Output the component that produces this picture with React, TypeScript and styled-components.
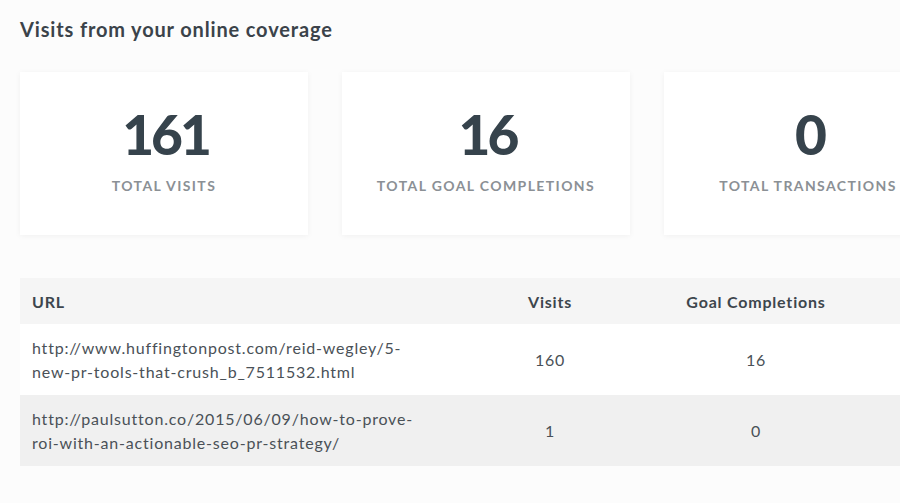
import styled, { createGlobalStyle } from "styled-components";

const GlobalStyle = createGlobalStyle`
  html, body {
    margin: 0;
    padding: 0;
    background: #fcfcfc;
    overflow: hidden;
  }
  body {
    font-family: Lato, "Noto Sans", sans-serif;
    color: #3a4249;
  }
`;

const stats = [
    { value: "161", label: "Total Visits" },
    { value: "16", label: "Total Goal Completions" },
    { value: "0", label: "Total Transactions" }
];

const rows = [
    {
        url: "http://www.huffingtonpost.com/reid-wegley/5-new-pr-tools-that-crush_b_7511532.html",
        visits: 160,
        goals: 16
    },
    {
        url: "http://paulsutton.co/2015/06/09/how-to-prove-roi-with-an-actionable-seo-pr-strategy/",
        visits: 1,
        goals: 0
    }
];

function App() {
    return (
        <>
            <GlobalStyle />
            <Page>
                <Title>Visits from your online coverage</Title>
                <Cards>
                    {stats.map((s) => (
                        <Card key={s.label}>
                            <Value>{s.value}</Value>
                            <Label>{s.label}</Label>
                        </Card>
                    ))}
                </Cards>
                <Table>
                    <HeadRow>
                        <HeadCell>URL</HeadCell>
                        <HeadCell $center>Visits</HeadCell>
                        <HeadCell $center>Goal Completions</HeadCell>
                        <HeadCell />
                    </HeadRow>
                    {rows.map((r, i) => (
                        <Row key={r.url} $striped={i % 2 === 1}>
                            <Cell>
                                <UrlText>{r.url}</UrlText>
                            </Cell>
                            <Cell $center>{r.visits}</Cell>
                            <Cell $center>{r.goals}</Cell>
                            <Cell />
                        </Row>
                    ))}
                </Table>
            </Page>
        </>
    );
}

const Page = styled.div`
  width: 960px;
  padding: 17px 0 0 20px;
`;

const Title = styled.h2`
  margin: 0;
  font-size: 20px;
  font-weight: 700;
  letter-spacing: 0.85px;
  color: #3b434a;
  line-height: 24px;
`;

const Cards = styled.div`
  display: flex;
  gap: 34px;
  margin-top: 31px;
`;

const Card = styled.div`
  flex: 0 0 288px;
  height: 163px;
  background: #fff;
  box-shadow: 0 1px 6px rgba(0, 0, 0, 0.05);
  display: flex;
  flex-direction: column;
  align-items: center;
  padding-top: 32px;
  box-sizing: border-box;
`;

const Value = styled.div`
  font-size: 55px;
  font-weight: 900;
  line-height: 60px;
  letter-spacing: -3px;
  padding-left: 3px;
  color: #36434c;
`;

const Label = styled.div`
  margin-top: 13px;
  font-size: 14px;
  font-weight: 700;
  letter-spacing: 1.4px;
  text-transform: uppercase;
  color: #8b9095;
`;

const Table = styled.div`
  margin-top: 43px;
  width: 900px;
`;

const gridCols = `
  display: grid;
  grid-template-columns: 470px 120px 292px 1fr;
  align-items: center;
`;

const HeadRow = styled.div`
  ${gridCols}
  height: 46px;
  background: #f5f5f5;
`;

const HeadCell = styled.div<{ $center?: boolean }>`
  padding: 0 ${(p) => (p.$center ? "0" : "12px")};
  text-align: ${(p) => (p.$center ? "center" : "left")};
  font-size: 16px;
  font-weight: 700;
  letter-spacing: 0.8px;
  color: #3d464d;
`;

const Row = styled.div<{ $striped?: boolean }>`
  ${gridCols}
  height: 71px;
  background: ${(p) => (p.$striped ? "#f0f0f0" : "#ffffff")};
`;

const Cell = styled.div<{ $center?: boolean }>`
  padding: 0 ${(p) => (p.$center ? "0" : "12px")};
  text-align: ${(p) => (p.$center ? "center" : "left")};
  font-size: 16px;
  letter-spacing: 0.8px;
  line-height: 24px;
  color: #4a5157;
`;

const UrlText = styled.div`
  max-width: 390px;
  overflow-wrap: anywhere;
`;

export default App;
